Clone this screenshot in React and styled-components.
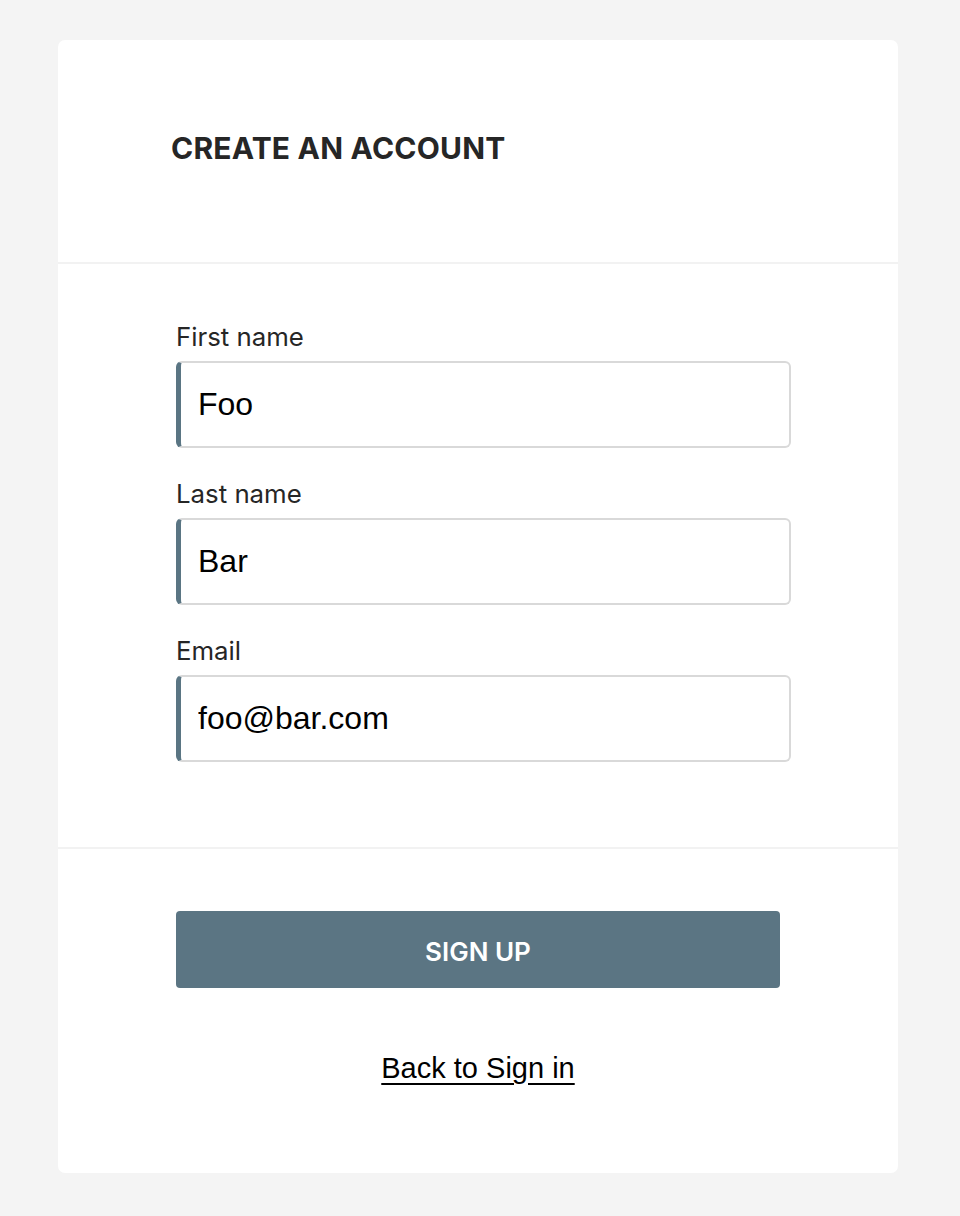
import React from 'react';
import styled, { createGlobalStyle } from 'styled-components';

const Global = createGlobalStyle`
  html, body {
    margin: 0;
    padding: 0;
    background: #f4f4f4;
  }
  * { box-sizing: border-box; }
`;

const Page = styled.div`
  padding: 40px 62px 43px 58px;
`;

const Card = styled.div`
  width: 840px;
  background: #fff;
  border-radius: 7px;
  display: flex;
  flex-direction: column;
`;

const Header = styled.div`
  height: 224px;
  border-bottom: 2px solid #f2f2f2;
  display: flex;
  align-items: center;
  padding: 0 0 7px 113px;
`;

const Title = styled.h1`
  margin: 0;
  font-family: Inter, "Noto Sans", sans-serif;
  font-weight: 700;
  font-size: 30px;
  color: #262626;
  letter-spacing: 0.2px;
`;

const Form = styled.div`
  padding: 57px 0 85px 118px;
  border-bottom: 2px solid #f2f2f2;
  display: flex;
  flex-direction: column;
  gap: 30px;
`;

const Field = styled.div`
  display: flex;
  flex-direction: column;
  gap: 8px;
`;

const Label = styled.label`
  font-family: Inter, "Noto Sans", sans-serif;
  font-size: 25.8px;
  line-height: 32px;
  color: #262626;
`;

const Input = styled.input`
  width: 615px;
  height: 87px;
  border: 2px solid #d9d9d9;
  border-left: 5px solid #5a7583;
  border-radius: 6px;
  padding: 0 0 0 17px;
  font-family: "Liberation Sans", Arial, sans-serif;
  font-size: 32px;
  color: #000;
  outline: none;
  background: #fff;
`;

const Footer = styled.div`
  padding: 62px 0 85px 118px;
  display: flex;
  flex-direction: column;
  gap: 60px;
`;

const Button = styled.button`
  width: 604px;
  height: 77px;
  border: none;
  border-radius: 4px;
  background: #5b7583;
  color: #fff;
  font-family: Inter, "Noto Sans", sans-serif;
  font-weight: 600;
  font-size: 26px;
  padding: 3px 0 0;
  cursor: pointer;
`;

const BackLink = styled.a`
  width: 604px;
  text-align: center;
  font-family: "Liberation Sans", Arial, sans-serif;
  font-size: 29px;
  line-height: 40px;
  color: #000;
  text-decoration: underline;
  text-decoration-thickness: 2px;
  text-underline-offset: 5px;
  cursor: pointer;
`;

const fields = [
  { id: 'first', label: 'First name', value: 'Foo' },
  { id: 'last', label: 'Last name', value: 'Bar' },
  { id: 'email', label: 'Email', value: 'foo@bar.com' },
];

export default function App() {
  return (
    <>
      <Global />
      <Page>
        <Card>
          <Header>
            <Title>CREATE AN ACCOUNT</Title>
          </Header>
          <Form>
            {fields.map((f) => (
              <Field key={f.id}>
                <Label htmlFor={f.id}>{f.label}</Label>
                <Input id={f.id} defaultValue={f.value} />
              </Field>
            ))}
          </Form>
          <Footer>
            <Button>SIGN UP</Button>
            <BackLink>Back to Sign in</BackLink>
          </Footer>
        </Card>
      </Page>
    </>
  );
}
